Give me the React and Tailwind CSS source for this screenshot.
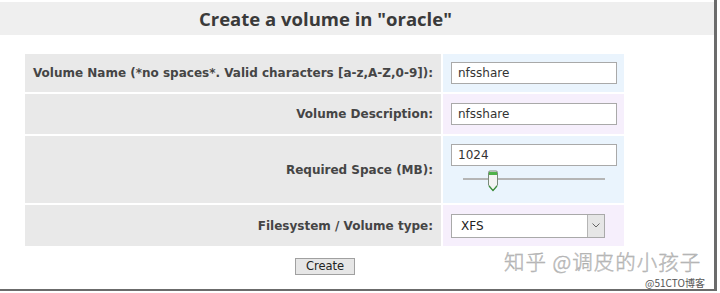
import React from "react";

const labelCls =
  "bg-[#e9e9e9] flex items-center justify-end pr-[8px] text-[12px] font-bold text-[#454545] whitespace-nowrap";

function TextInput({ value }) {
  return (
    <div className="w-[166px] h-[22px] bg-white border border-[#a9a9a9] flex items-center pl-[6px] text-[12px] text-[#333]">
      {value}
    </div>
  );
}

export default function App() {
  return (
    <div
      className="w-[720px] h-[293px] bg-white relative overflow-hidden"
      style={{ fontFamily: '"DejaVu Sans", Verdana, sans-serif' }}
    >
      <div className="w-[717px] h-[291px] border-r-[3px] border-b-[2px] border-[#6b6b6b] flex flex-col">
        <div className="mt-[2px] h-[33px] bg-[#efefef] flex items-center pl-[199px]">
          <span
            className="text-[18.5px] font-bold text-[#3a3a3a] whitespace-nowrap"
            style={{ fontFamily: '"Open Sans", "Liberation Sans", sans-serif' }}
          >
            Create a volume in "oracle"
          </span>
        </div>
        <div className="ml-[25px] mt-[19px] grid grid-cols-[416px_181px] grid-rows-[38px_40px_67px_41px] gap-x-[2px] gap-y-[2px]">
          <div className={labelCls}>Volume Name (*no spaces*. Valid characters [a-z,A-Z,0-9]):</div>
          <div className="bg-[#eaf4fd] flex items-center pl-[8px]">
            <TextInput value="nfsshare" />
          </div>
          <div className={labelCls}>Volume Description:</div>
          <div className="bg-[#f6effc] flex items-center pl-[8px]">
            <TextInput value="nfsshare" />
          </div>
          <div className={labelCls}>Required Space (MB):</div>
          <div className="bg-[#eaf4fd] flex flex-col pl-[8px] pt-[8px]">
            <TextInput value="1024" />
            <div className="relative h-[26px] w-[166px]">
              <div className="absolute left-[12px] top-[12px] w-[142px] h-[2px] bg-[#b5b5b5]" />
              <svg
                className="absolute left-[36px] top-[4px]"
                width="12"
                height="22"
                viewBox="0 0 12 22"
              >
                <path
                  d="M1.5 2.5 Q1.5 1 3 1 L9 1 Q10.5 1 10.5 2.5 L10.5 15 L6 20.5 L1.5 15 Z"
                  fill="#f4f4f4"
                  stroke="#7a8a7a"
                  strokeWidth="1"
                />
                <path d="M2 2 L10 2 L10 5 L2 5 Z" fill="#4fb24a" />
                <path d="M2 16 L6 20.5 L10 16" fill="none" stroke="#3c8f3a" strokeWidth="1.2" />
              </svg>
            </div>
          </div>
          <div className={labelCls}>Filesystem / Volume type:</div>
          <div className="bg-[#f6effc] flex items-center pl-[8px]">
            <div className="w-[154px] h-[24px] bg-white border border-[#a9a9a9] flex items-center">
              <span className="flex-1 pl-[9px] text-[12px] text-[#222]">XFS</span>
              <div className="w-[17px] h-full bg-[#e6e6e6] border-l border-[#b5b5b5] flex items-center justify-center">
                <svg width="8" height="5" viewBox="0 0 8 5">
                  <path d="M0.5 0.5 L4 4 L7.5 0.5" fill="none" stroke="#666" strokeWidth="1" />
                </svg>
              </div>
            </div>
          </div>
        </div>
        <div className="flex-1 relative">
          <div className="absolute left-[295px] top-[12px] w-[60px] h-[17px] bg-[#e6e6e6] border border-[#a0a0a0] flex items-center justify-center text-[11.5px] text-[#222]">
            Create
          </div>
        </div>
      </div>
      <div
        className="absolute left-[504px] top-[249px] text-[20.5px] leading-[24px] text-[#c8c8c8] tracking-[1px] whitespace-nowrap"
        style={{
          fontFamily: '"Noto Sans CJK SC", sans-serif',
          WebkitTextStroke: "0.4px #a8a8a8",
          fontWeight: 300,
        }}
      >
        知乎 @调皮的小孩子
      </div>
      <div
        className="absolute left-[645px] top-[277px] text-[10px] leading-[11px] text-[#555] whitespace-nowrap"
        style={{ fontFamily: '"Noto Sans CJK SC", sans-serif' }}
      >
        @51CTO博客
      </div>
    </div>
  );
}
